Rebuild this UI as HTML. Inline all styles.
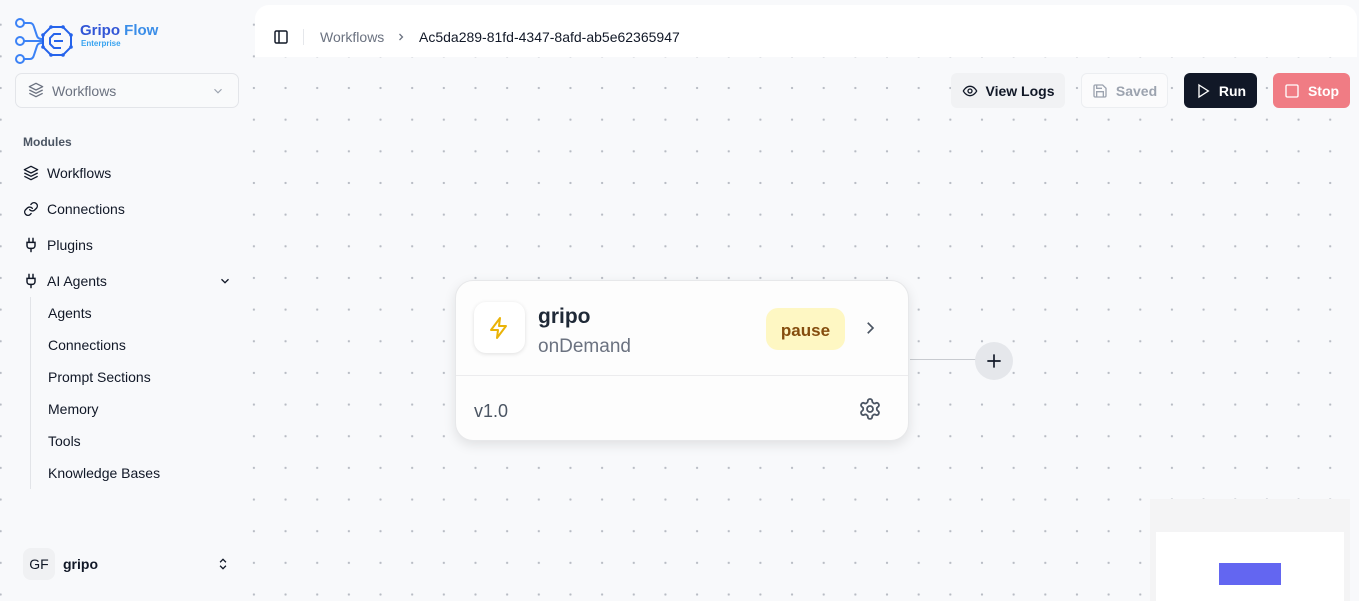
<!DOCTYPE html>
<html><head><meta charset="utf-8"><style>
*{margin:0;padding:0;box-sizing:border-box}
body{width:1359px;height:601px;overflow:hidden;font-family:"Liberation Sans",sans-serif;background:#f8f9fb;position:relative;color:#111827}
.canvas{position:absolute;left:0;top:0;width:1359px;height:601px;background-color:#f8f9fb;background-image:radial-gradient(circle,#b8bcc4 1px,transparent 1.3px);background-size:31.67px 31.67px;background-position:-15.2px -22.8px}
.side{position:absolute;left:6px;top:0;width:242px;height:601px;background:#f8f9fb}
.abs{position:absolute}
.hdr{position:absolute;left:255px;top:5px;width:1102px;height:52px;background:#fff;border-radius:14px 14px 0 0}
.btn{position:absolute;top:73px;height:35px;border-radius:6px;font-size:14px;font-weight:bold;display:flex;align-items:center;justify-content:center;gap:8px}
.nav{position:absolute;left:23px;font-size:14px;color:#111827;display:flex;align-items:center;gap:8px}
.sub{position:absolute;left:48px;font-size:14px;color:#111827}
</style></head><body>
<div class="canvas"></div>
<div class="side"></div>
<svg class="abs" style="left:10px;top:14px" width="70" height="54" viewBox="10 14 70 54">
<g fill="none" stroke="#3b82f6" stroke-width="2">
<circle cx="20" cy="23" r="4"/><circle cx="20" cy="41" r="4"/><circle cx="20" cy="59" r="4"/>
<path d="M24 23h6q3 0 4 4l3 9q1 3 5 3M24 41h18M24 59h6q3 0 4-4l3-9q1-3 5-3"/>
</g>
<g fill="none" stroke="#2563eb" stroke-width="2">
<polygon points="51,27 63,27 71,35 71,47 63,55 51,55 43,47 43,35"/>
<path d="M61 34h-7l-4 4v6l4 4h7M54 41h9"/>
</g>
<g fill="#2563eb"><circle cx="51" cy="27" r="1.8"/><circle cx="63" cy="27" r="1.8"/><circle cx="71" cy="35" r="1.8"/><circle cx="71" cy="47" r="1.8"/><circle cx="63" cy="55" r="1.8"/><circle cx="51" cy="55" r="1.8"/><circle cx="43" cy="47" r="1.8"/><circle cx="43" cy="35" r="1.8"/></g>
</svg>
<div class="abs" style="left:80px;top:22px;font-size:15px;font-weight:bold;color:#3256d6">Gripo <span style="color:#3b8ee8">Flow</span></div>
<div class="abs" style="left:81px;top:39px;font-size:8px;font-weight:bold;color:#38a3f0">Enterprise</div>
<div class="abs" style="left:15px;top:73px;width:224px;height:35px;border:1px solid #e3e5e9;border-radius:7px;background:#f9fafb"></div>
<svg class="abs" style="left:28px;top:82px" width="16" height="16" viewBox="0 0 24 24" fill="none" stroke="#6b7280" stroke-width="2" stroke-linejoin="round"><path d="M12 2 2 7l10 5 10-5z"/><path d="m2 12 10 5 10-5M2 17l10 5 10-5"/></svg>
<div class="abs" style="left:52px;top:83px;font-size:14px;color:#6b7280">Workflows</div>
<svg class="abs" style="left:211px;top:84px" width="14" height="14" viewBox="0 0 24 24" fill="none" stroke="#9ca3af" stroke-width="2"><path d="m6 9 6 6 6-6"/></svg>
<div class="abs" style="left:23px;top:135px;font-size:12px;font-weight:bold;color:#4b5563">Modules</div>
<div class="nav" style="top:165px"><svg width="16" height="16" viewBox="0 0 24 24" fill="none" stroke="#111827" stroke-width="2" stroke-linejoin="round"><path d="M12 2 2 7l10 5 10-5z"/><path d="m2 12 10 5 10-5M2 17l10 5 10-5"/></svg>Workflows</div>
<div class="nav" style="top:201px"><svg width="16" height="16" viewBox="0 0 24 24" fill="none" stroke="#111827" stroke-width="2" stroke-linecap="round"><path d="M10 13a5 5 0 0 0 7.5.5l3-3a5 5 0 0 0-7-7l-1.7 1.7"/><path d="M14 11a5 5 0 0 0-7.5-.5l-3 3a5 5 0 0 0 7 7l1.7-1.7"/></svg>Connections</div>
<div class="nav" style="top:237px"><svg width="16" height="16" viewBox="0 0 24 24" fill="none" stroke="#111827" stroke-width="2.2" stroke-linecap="round"><path d="M12 22v-5M9 8V2M15 8V2M18 8v5a4 4 0 0 1-4 4h-4a4 4 0 0 1-4-4V8z"/></svg>Plugins</div>
<div class="nav" style="top:273px"><svg width="16" height="16" viewBox="0 0 24 24" fill="none" stroke="#111827" stroke-width="2.2" stroke-linecap="round"><path d="M12 22v-5M9 8V2M15 8V2M18 8v5a4 4 0 0 1-4 4h-4a4 4 0 0 1-4-4V8z"/></svg>AI Agents</div>
<svg class="abs" style="left:218px;top:274px" width="14" height="14" viewBox="0 0 24 24" fill="none" stroke="#111827" stroke-width="2.2"><path d="m6 9 6 6 6-6"/></svg>
<div class="abs" style="left:30px;top:297px;width:1px;height:192px;background:#e2e4e8"></div>
<div class="sub" style="top:305px">Agents</div>
<div class="sub" style="top:337px">Connections</div>
<div class="sub" style="top:369px">Prompt Sections</div>
<div class="sub" style="top:401px">Memory</div>
<div class="sub" style="top:433px">Tools</div>
<div class="sub" style="top:465px">Knowledge Bases</div>
<div class="abs" style="left:23px;top:548px;width:32px;height:32px;border-radius:8px;background:#f0f1f3;font-size:14px;display:flex;align-items:center;justify-content:center;color:#111827">GF</div>
<div class="abs" style="left:63px;top:556px;font-size:14px;font-weight:bold">gripo</div>
<svg class="abs" style="left:216px;top:556px" width="14" height="16" viewBox="0 0 24 24" fill="none" stroke="#111827" stroke-width="2.2"><path d="m7 9 5-5 5 5M7 15l5 5 5-5"/></svg>
<div class="hdr"></div>
<svg class="abs" style="left:273px;top:29px" width="16" height="16" viewBox="0 0 24 24" fill="none" stroke="#111827" stroke-width="2.2"><rect x="3" y="3" width="18" height="18" rx="2"/><path d="M9 3v18"/></svg>
<div class="abs" style="left:303px;top:29px;width:1px;height:16px;background:#e5e7eb"></div>
<div class="abs" style="left:320px;top:29px;font-size:14px;color:#6b7280">Workflows</div>
<svg class="abs" style="left:395px;top:31px" width="12" height="12" viewBox="0 0 24 24" fill="none" stroke="#6b7280" stroke-width="2.5"><path d="m9 6 6 6-6 6"/></svg>
<div class="abs" style="left:419px;top:29px;font-size:14px;color:#111827">Ac5da289-81fd-4347-8afd-ab5e62365947</div>
<div class="btn" style="left:951px;width:114px;background:#f1f2f4;color:#111827"><svg width="16" height="16" viewBox="0 0 24 24" fill="none" stroke="#111827" stroke-width="2"><path d="M2 12s3.5-7 10-7 10 7 10 7-3.5 7-10 7S2 12 2 12z"/><circle cx="12" cy="12" r="3"/></svg>View Logs</div>
<div class="btn" style="left:1081px;width:87px;background:#fbfbfc;border:1px solid #eceef1;color:#9ca3af"><svg width="16" height="16" viewBox="0 0 24 24" fill="none" stroke="#9ca3af" stroke-width="2"><path d="M19 21H5a2 2 0 0 1-2-2V5a2 2 0 0 1 2-2h11l5 5v11a2 2 0 0 1-2 2z"/><path d="M17 21v-8H7v8M7 3v5h8"/></svg>Saved</div>
<div class="btn" style="left:1184px;width:73px;background:#111827;color:#fff"><svg width="16" height="16" viewBox="0 0 24 24" fill="none" stroke="#fff" stroke-width="2"><path d="m6 3 14 9-14 9z"/></svg>Run</div>
<div class="btn" style="left:1273px;width:77px;background:#f07c84;color:#fff"><svg width="16" height="16" viewBox="0 0 24 24" fill="none" stroke="#fff" stroke-width="2"><rect x="3" y="3" width="18" height="18" rx="2"/></svg>Stop</div>
<div class="abs" style="left:910px;top:359px;width:66px;height:1px;background:#c8cbd0"></div>
<div class="abs" style="left:975px;top:342px;width:38px;height:38px;border-radius:50%;background:#e5e7eb"></div>
<svg class="abs" style="left:984px;top:351px" width="20" height="20" viewBox="0 0 24 24" fill="none" stroke="#111827" stroke-width="2"><path d="M12 4v16M4 12h16"/></svg>
<div class="abs" style="left:455px;top:280px;width:454px;height:161px;background:#fdfdfd;border:1px solid #e7e8ea;border-radius:18px;box-shadow:0 4px 12px rgba(0,0,0,.10)"></div>
<div class="abs" style="left:456px;top:375px;width:452px;height:1px;background:#ececee"></div>
<div class="abs" style="left:474px;top:302px;width:51px;height:51px;border-radius:12px;background:#fff;box-shadow:0 1px 4px rgba(0,0,0,.12)"></div>
<svg class="abs" style="left:487px;top:316px" width="24" height="24" viewBox="0 0 24 24" fill="none" stroke="#eab308" stroke-width="2" stroke-linejoin="round"><path d="M13 2 4 14h7l-1 8 9-12h-7z"/></svg>
<div class="abs" style="left:538px;top:305px;font-size:21px;font-weight:bold;color:#1f2937">gripo</div>
<div class="abs" style="left:538px;top:336px;font-size:19px;color:#6b7280">onDemand</div>
<div class="abs" style="left:766px;top:308px;width:79px;height:42px;border-radius:12px;background:#fef7c3;color:#854d0e;font-size:17px;font-weight:bold;display:flex;align-items:center;justify-content:center;padding-top:3px">pause</div>
<svg class="abs" style="left:861px;top:319px" width="18" height="18" viewBox="0 0 24 24" fill="none" stroke="#4b5563" stroke-width="2.2"><path d="m9 5 7 7-7 7"/></svg>
<div class="abs" style="left:474px;top:401px;font-size:18px;color:#4b5563">v1.0</div>
<svg class="abs" style="left:858px;top:397px" width="24" height="24" viewBox="0 0 24 24" fill="none" stroke="#4b5563" stroke-width="1.8"><path d="M12.2 2h-.4a2 2 0 0 0-2 2v.2a2 2 0 0 1-1 1.7l-.4.3a2 2 0 0 1-2 0l-.2-.1a2 2 0 0 0-2.7.7l-.2.4a2 2 0 0 0 .7 2.7l.2.1a2 2 0 0 1 1 1.7v.5a2 2 0 0 1-1 1.7l-.2.1a2 2 0 0 0-.7 2.7l.2.4a2 2 0 0 0 2.7.7l.2-.1a2 2 0 0 1 2 0l.4.3a2 2 0 0 1 1 1.7v.2a2 2 0 0 0 2 2h.4a2 2 0 0 0 2-2v-.2a2 2 0 0 1 1-1.7l.4-.3a2 2 0 0 1 2 0l.2.1a2 2 0 0 0 2.7-.7l.2-.4a2 2 0 0 0-.7-2.7l-.2-.1a2 2 0 0 1-1-1.7v-.5a2 2 0 0 1 1-1.7l.2-.1a2 2 0 0 0 .7-2.7l-.2-.4a2 2 0 0 0-2.7-.7l-.2.1a2 2 0 0 1-2 0l-.4-.3a2 2 0 0 1-1-1.7V4a2 2 0 0 0-2-2z"/><circle cx="12" cy="12" r="3"/></svg>
<div class="abs" style="left:1150px;top:499px;width:200px;height:102px;background:#f4f4f5"></div>
<div class="abs" style="left:1156px;top:532px;width:188px;height:69px;background:#fff"></div>
<div class="abs" style="left:1219px;top:563px;width:62px;height:22px;background:#6366f1"></div>
</body></html>
